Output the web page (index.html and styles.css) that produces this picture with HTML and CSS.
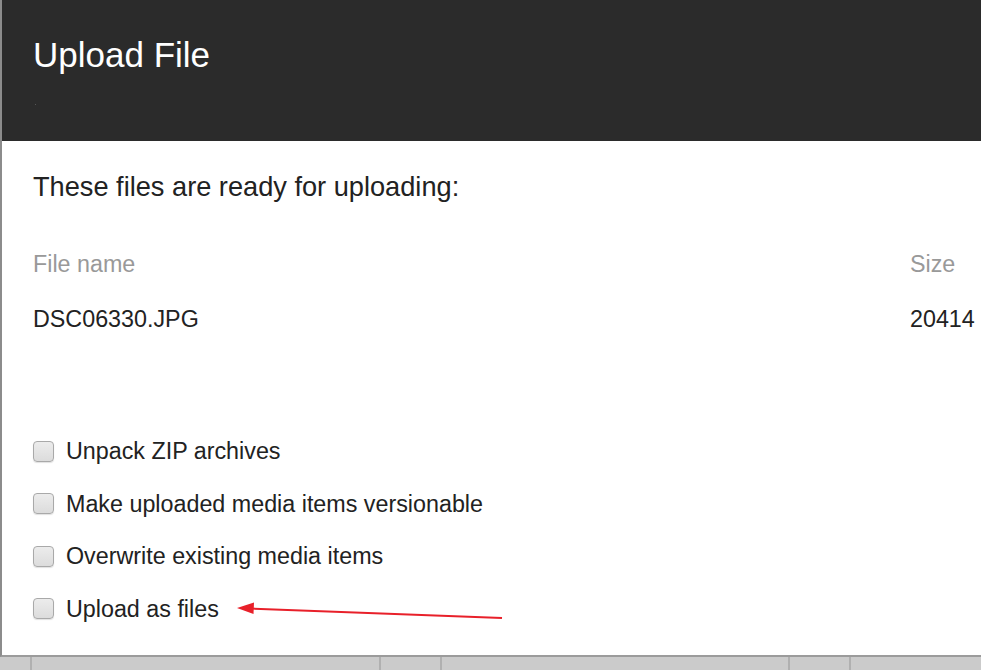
FILE: index.html
```html
<!DOCTYPE html>
<html lang="en">
<head>
<meta charset="utf-8">
<title>Upload File</title>
<link rel="stylesheet" href="styles.css">
</head>
<body>
<div class="dialog">
  <div class="header">
    <h1 class="title">Upload File</h1>
    <span class="speck"></span>
  </div>
  <div class="content">
    <p class="lead">These files are ready for uploading:</p>
    <div class="files">
      <div class="th">File name</div>
      <div class="th">Size</div>
      <div class="td">DSC06330.JPG</div>
      <div class="td">20414</div>
    </div>
    <div class="options">
      <label class="option"><span class="box"></span>Unpack ZIP archives</label>
      <label class="option"><span class="box"></span>Make uploaded media items versionable</label>
      <label class="option"><span class="box"></span>Overwrite existing media items</label>
      <label class="option"><span class="box"></span>Upload as files</label>
    </div>
  </div>
  <svg class="arrow" width="981" height="670" viewBox="0 0 981 670">
    <line x1="502" y1="618" x2="250" y2="608.5" stroke="#e8202a" stroke-width="2"/>
    <polygon points="237,608 254,602.5 253.5,614" fill="#e8202a"/>
  </svg>
</div>
<div class="footer">
  <span class="cell c1"></span>
  <span class="cell c2"></span>
  <span class="cell c3"></span>
  <span class="cell c4"></span>
  <span class="cell c5"></span>
  <span class="cell c6"></span>
</div>
</body>
</html>
```
FILE: styles.css
```css
html, body {
  margin: 0;
  padding: 0;
  background: #ffffff;
}
body {
  width: 981px;
  height: 670px;
  overflow: hidden;
  font-family: "Liberation Sans", Arial, sans-serif;
}
.dialog {
  position: relative;
  height: 657px;
  box-sizing: border-box;
  border-left: 2px solid #8c8c8c;
  border-bottom: 2px solid #9b9b9b;
  background: #ffffff;
}
.header {
  position: relative;
  height: 141px;
  box-sizing: border-box;
  padding: 35px 0 0 31px;
  background: #2b2b2b;
}
.title {
  margin: 0;
  font-size: 35px;
  line-height: 40px;
  font-weight: normal;
  color: #ffffff;
}
.speck {
  position: absolute;
  left: 33px;
  top: 104px;
  width: 1px;
  height: 1px;
  background: #555;
}
.content {
  padding: 0 0 0 31px;
}
.lead {
  margin: 30px 0 0;
  font-size: 27.2px;
  line-height: 31px;
  color: #222222;
}
.files {
  display: grid;
  grid-template-columns: 877px auto;
  row-gap: 29px;
  margin-top: 49px;
  font-size: 23.3px;
  line-height: 26px;
  white-space: nowrap;
}
.th {
  color: #999999;
}
.td {
  color: #222222;
}
.options {
  display: flex;
  flex-direction: column;
  gap: 26.5px;
  margin-top: 106px;
}
.option {
  display: flex;
  align-items: center;
  gap: 12px;
  font-size: 23.3px;
  line-height: 26px;
  color: #222222;
}
.box {
  width: 19px;
  height: 19px;
  border: 1px solid #a9a9a9;
  border-radius: 4px;
  background: linear-gradient(#ececec, #dcdcdc);
  box-shadow: 0 1px 1px rgba(0,0,0,0.12);
  flex: none;
}
.arrow {
  position: absolute;
  left: -2px;
  top: 0;
  pointer-events: none;
}
.footer {
  display: flex;
  height: 13px;
  background: #cbcbcb;
}
.cell {
  height: 100%;
  border-right: 2px solid #b0b0b0;
  box-sizing: border-box;
}
.c1 { width: 32px; }
.c2 { width: 349px; }
.c3 { width: 61px; }
.c4 { width: 348px; }
.c5 { width: 61px; }
.c6 { flex: 1; border-right: none; }
```
